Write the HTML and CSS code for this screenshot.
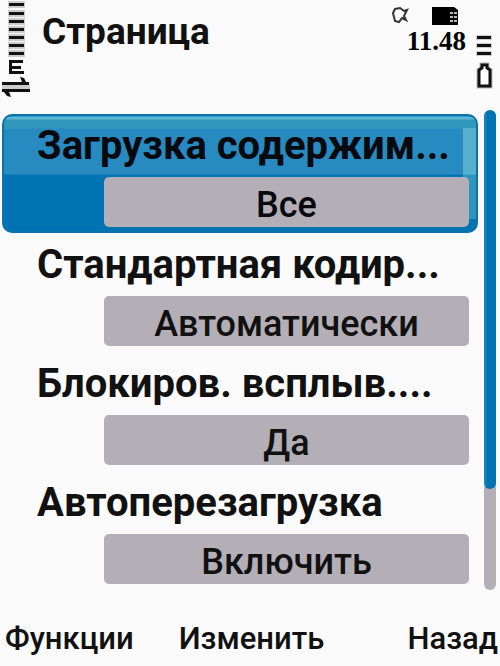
FILE: index.html
```
<!DOCTYPE html>
<html lang="ru">
<head>
<meta charset="UTF-8" />
<meta name="viewport" content="width=device-width, initial-scale=1" />
<title>Страница</title>
<link rel="stylesheet" href="styles.css">
</head>
<body>

<header class="status-bar">
  <svg class="signal" width="32" height="98" viewBox="0 0 32 98" aria-hidden="true">
    <g fill="#ccc">
      <path d="M8 1h17v7H8zM8 10h17v7H8zM8 18h17v7H8zM8 26h17v7H8zM8 34h17v7H8zM8 42h17v7H8zM8 50h17v7H8zM2 84h28v5H2z"/>
    </g>
    <g fill="#111">
      <path d="M9 3h15v3H9zM9 12h15v3H9zM9 20h15v3H9zM9 28h15v3H9zM9 36h15v3H9zM9 44h15v3H9zM9 52h15v3H9z"/>
      <path d="M9 60h14v3H12v3h9v3h-9v2h12v3H9z"/>
      <path d="M20 77l4 1 2 4h3v3H2v-3h20zM2 89h28v3H9l2 5-4-1-3-4H2z"/>
    </g>
  </svg>
  <h1>Страница</h1>
  <div class="status">
    <svg width="76" height="22" viewBox="0 0 76 22" aria-hidden="true">
      <path d="M3 8l2-4 5-1 4 3 3-1-2 4-1 2 2 4-4-2-3 4-4-1-1-4z" fill="#fff" stroke="#333" stroke-width="2"/>
      <path d="M42 2h22l4 3v15H42z" fill="#000"/>
      <path d="M60 7h3v2h-3zM64 7h3v2h-3zM60 11h3v2h-3zM64 11h3v2h-3zM60 15h3v2h-3zM64 15h3v2h-3z" fill="#bbb"/>
    </svg>
    <time>11.48</time>
  </div>
  <svg class="battery" width="20" height="56" viewBox="0 0 20 56" aria-hidden="true">
    <path d="M0 1h16v5H0zM0 9h16v5H0zM0 17h16v5H0z" fill="#ccc"/>
    <path d="M1 2h14v3H1zM1 10h14v3H1zM1 18h14v3H1z" fill="#111"/>
    <path d="M3 52V36l3-2v-3h5v3l3 2v16z" fill="#fff" stroke="#bbb" stroke-width="5"/>
    <path d="M3 52V36l3-2v-3h5v3l3 2v16z" fill="#fff" stroke="#111" stroke-width="3"/>
  </svg>
</header>

<main class="content">
  <div class="settings">
    <div class="setting selected">
      <label for="load">Загрузка содержим...</label>
      <button type="button" id="load">Все</button>
    </div>
    <div class="setting">
      <label for="encoding">Стандартная кодир...</label>
      <button type="button" id="encoding">Автоматически</button>
    </div>
    <div class="setting">
      <label for="popups">Блокиров. всплыв....</label>
      <button type="button" id="popups">Да</button>
    </div>
    <div class="setting">
      <label for="reload">Автоперезагрузка</label>
      <button type="button" id="reload">Включить</button>
    </div>
  </div>
  <div class="scrollbar"><div class="thumb"></div></div>
</main>

<footer class="softkeys">
  <button type="button">Функции</button>
  <button type="button">Изменить</button>
  <button type="button">Назад</button>
</footer>

</body>
</html>
```
FILE: styles.css
```
* {
  box-sizing: border-box;
}
body {
  margin: 0;
  min-height: 100vh;
  display: flex;
  flex-direction: column;
  background-color: #fafafa;
  color: #111;
  font-family: Roboto, "Noto Sans", sans-serif;
}
button {
  border: none;
  padding: 0;
  background: none;
  color: inherit;
  font-family: inherit;
  font-weight: 500;
  cursor: pointer;
}
.status-bar {
  display: flex;
  height: 110px;
  padding-right: 4px;
}
.status-bar h1 {
  flex: 1;
  margin: 8px 0 0 10px;
  font-size: 37px;
  line-height: 48px;
}
.status {
  display: flex;
  flex-direction: column;
  align-items: flex-end;
  padding-top: 5px;
  margin-right: 10px;
}
.status time {
  font-family: "Liberation Serif", serif;
  font-size: 27px;
  font-weight: bold;
  line-height: 28px;
  color: #000;
}
.battery {
  margin-top: 34px;
}
.content {
  display: flex;
  gap: 6px;
  padding: 0 4px 0 2px;
}
.settings {
  flex: 1;
  padding-top: 4px;
}
.setting {
  display: flex;
  flex-direction: column;
  height: 119px;
  padding: 7px 9px 6px 35px;
}
.setting label {
  height: 56px;
  font-size: 40px;
  font-weight: bold;
  line-height: 50px;
  white-space: nowrap;
}
.setting button {
  height: 50px;
  margin-left: 67px;
  padding-top: 6px;
  border-radius: 5px;
  background-color: #b4aeb7;
  font-size: 36px;
  line-height: 44px;
}
.selected {
  border-radius: 10px;
  color: #06090d;
  background:
    linear-gradient(#55b0ce 0 46px, #2e95bd 47px) right 1px top 14px / 14px 91px no-repeat,
    linear-gradient(#0878b4 0 2px, #5fb5d4 3px 5px, #3198bc 6px 14px, #278bc2 15px 60px, #0073b3 61px);
  box-shadow: inset 0 0 0 2px #0873ad;
}
.scrollbar {
  width: 12px;
  border-radius: 6px;
  background-color: #b4aeb7;
}
.thumb {
  height: 79%;
  border-radius: 6px;
  background: linear-gradient(90deg, #1b82b8 0 2px, #0074b3 3px);
}
.softkeys {
  display: grid;
  grid-template-columns: 1fr auto 1fr;
  margin-top: auto;
  padding: 0 2px 4px 5px;
}
.softkeys button {
  font-size: 31px;
  font-weight: 500;
  line-height: 46px;
}
.softkeys button:first-child {
  justify-self: start;
}
.softkeys button:last-child {
  justify-self: end;
}
```
